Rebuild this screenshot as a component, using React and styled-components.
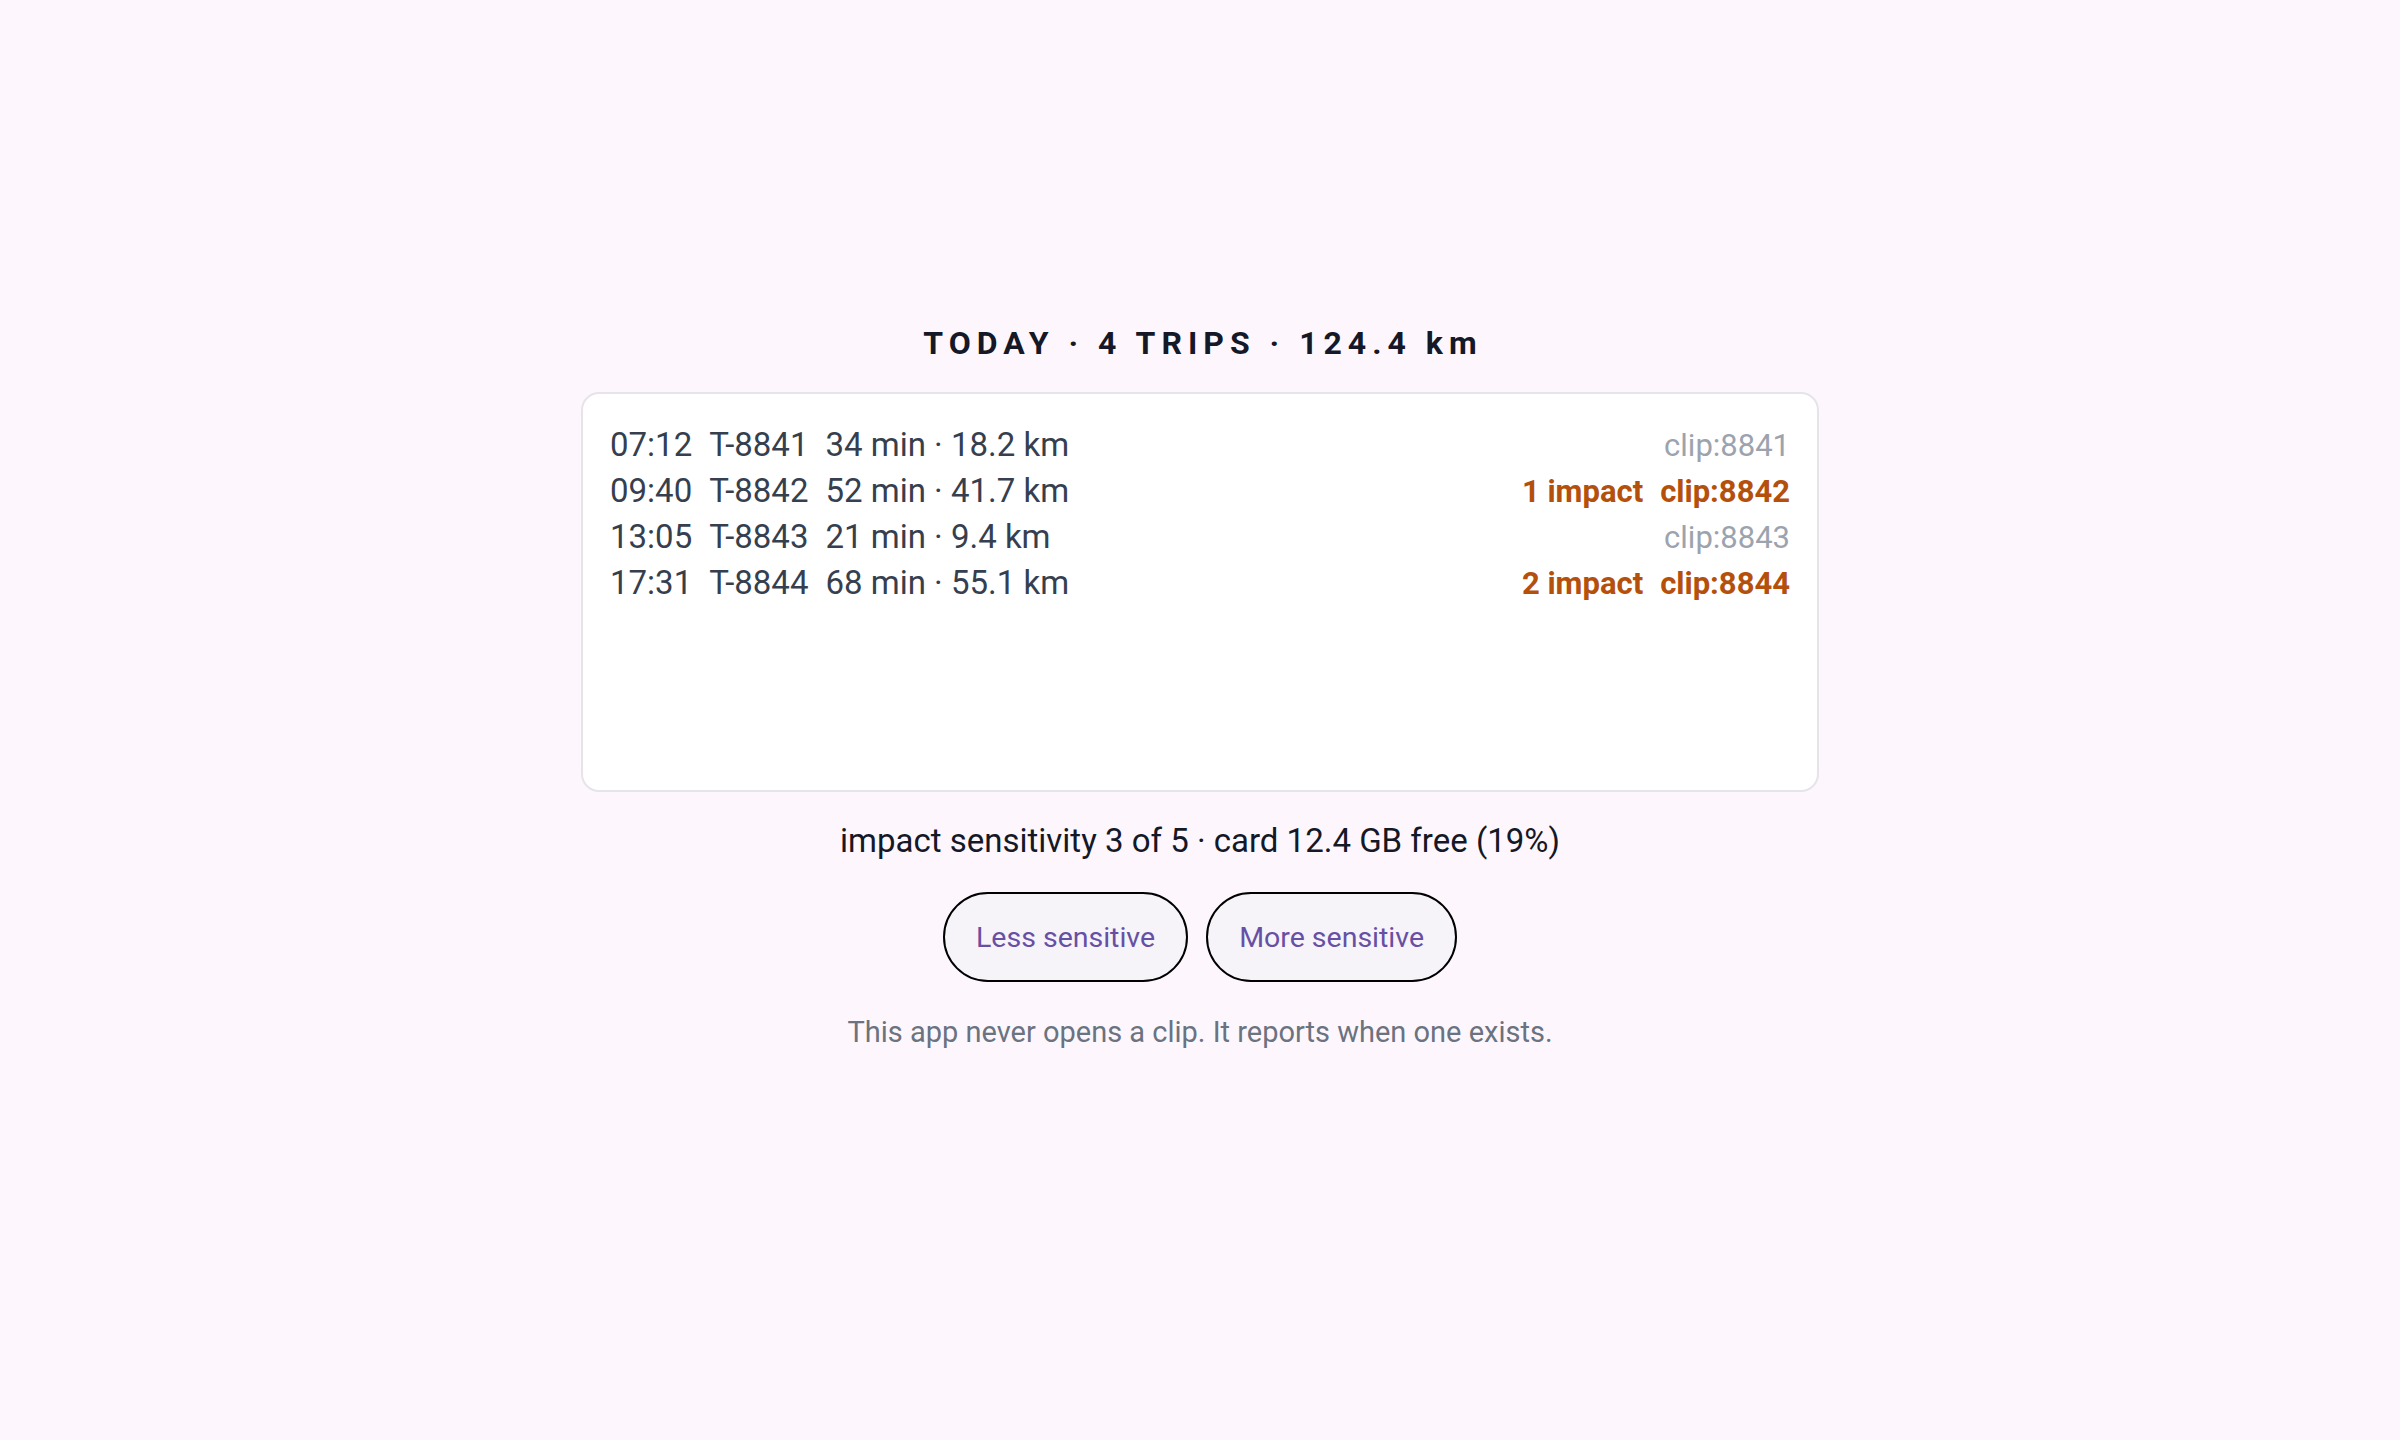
import React from 'react';
import styled, { createGlobalStyle } from 'styled-components';

const GlobalStyle = createGlobalStyle`
  html, body {
    margin: 0;
    padding: 0;
    background: #fdf7fd;
  }
  body {
    font-family: Roboto, "Liberation Sans", sans-serif;
  }
`;

const Page = styled.main`
  min-height: 1440px;
  box-sizing: border-box;
  padding-top: 324px;
  display: flex;
  flex-direction: column;
  align-items: center;
`;

const Title = styled.h1`
  margin: 0 0 30px;
  font-size: 32px;
  line-height: 1.2;
  font-weight: 700;
  letter-spacing: 6px;
  color: #141827;
  padding-left: 6px;
`;

const Card = styled.section`
  width: 1238px;
  height: 400px;
  box-sizing: border-box;
  padding: 28px 27px;
  background: #ffffff;
  border: 2px solid #e6e3ea;
  border-radius: 18px;
`;

const Row = styled.div`
  display: flex;
  justify-content: space-between;
  align-items: baseline;
  line-height: 45px;
`;

const Trip = styled.div`
  display: flex;
  gap: 17px;
  font-size: 33px;
  color: #363f4f;
`;

const Flags = styled.div`
  display: flex;
  gap: 17px;
  font-size: 31px;
  font-weight: ${p => (p.$hit ? 700 : 400)};
  color: ${p => (p.$hit ? '#b4500b' : '#9ca3af')};
`;

const Status = styled.p`
  margin: 26px 0 0;
  font-size: 33px;
  line-height: 1.4;
  color: #141827;
`;

const Buttons = styled.div`
  display: flex;
  gap: 18px;
  margin-top: 27.5px;
`;

const Pill = styled.button`
  height: 90px;
  padding: 0 31px;
  border: 2px solid #000;
  border-radius: 45px;
  background: #f6f3f9;
  color: #6750a4;
  font-family: Roboto, "Liberation Sans", sans-serif;
  font-size: 28.5px;
  cursor: pointer;
`;

const Note = styled.p`
  margin: 30px 0 0;
  font-size: 29px;
  line-height: 1.4;
  color: #6b7280;
`;

const trips = [
  { time: '07:12', id: 'T-8841', dur: '34 min · 18.2 km', impacts: 0, clip: 'clip:8841' },
  { time: '09:40', id: 'T-8842', dur: '52 min · 41.7 km', impacts: 1, clip: 'clip:8842' },
  { time: '13:05', id: 'T-8843', dur: '21 min · 9.4 km', impacts: 0, clip: 'clip:8843' },
  { time: '17:31', id: 'T-8844', dur: '68 min · 55.1 km', impacts: 2, clip: 'clip:8844' },
];

export default function App() {
  return (
    <>
      <GlobalStyle />
      <Page>
        <Title>TODAY · 4 TRIPS · 124.4 km</Title>
        <Card>
          {trips.map(t => (
            <Row key={t.id}>
              <Trip>
                <span>{t.time}</span>
                <span>{t.id}</span>
                <span>{t.dur}</span>
              </Trip>
              <Flags $hit={t.impacts > 0}>
                {t.impacts > 0 && <span>{t.impacts} impact</span>}
                <span>{t.clip}</span>
              </Flags>
            </Row>
          ))}
        </Card>
        <Status>impact sensitivity 3 of 5 · card 12.4 GB free (19%)</Status>
        <Buttons>
          <Pill>Less sensitive</Pill>
          <Pill>More sensitive</Pill>
        </Buttons>
        <Note>This app never opens a clip. It reports when one exists.</Note>
      </Page>
    </>
  );
}
